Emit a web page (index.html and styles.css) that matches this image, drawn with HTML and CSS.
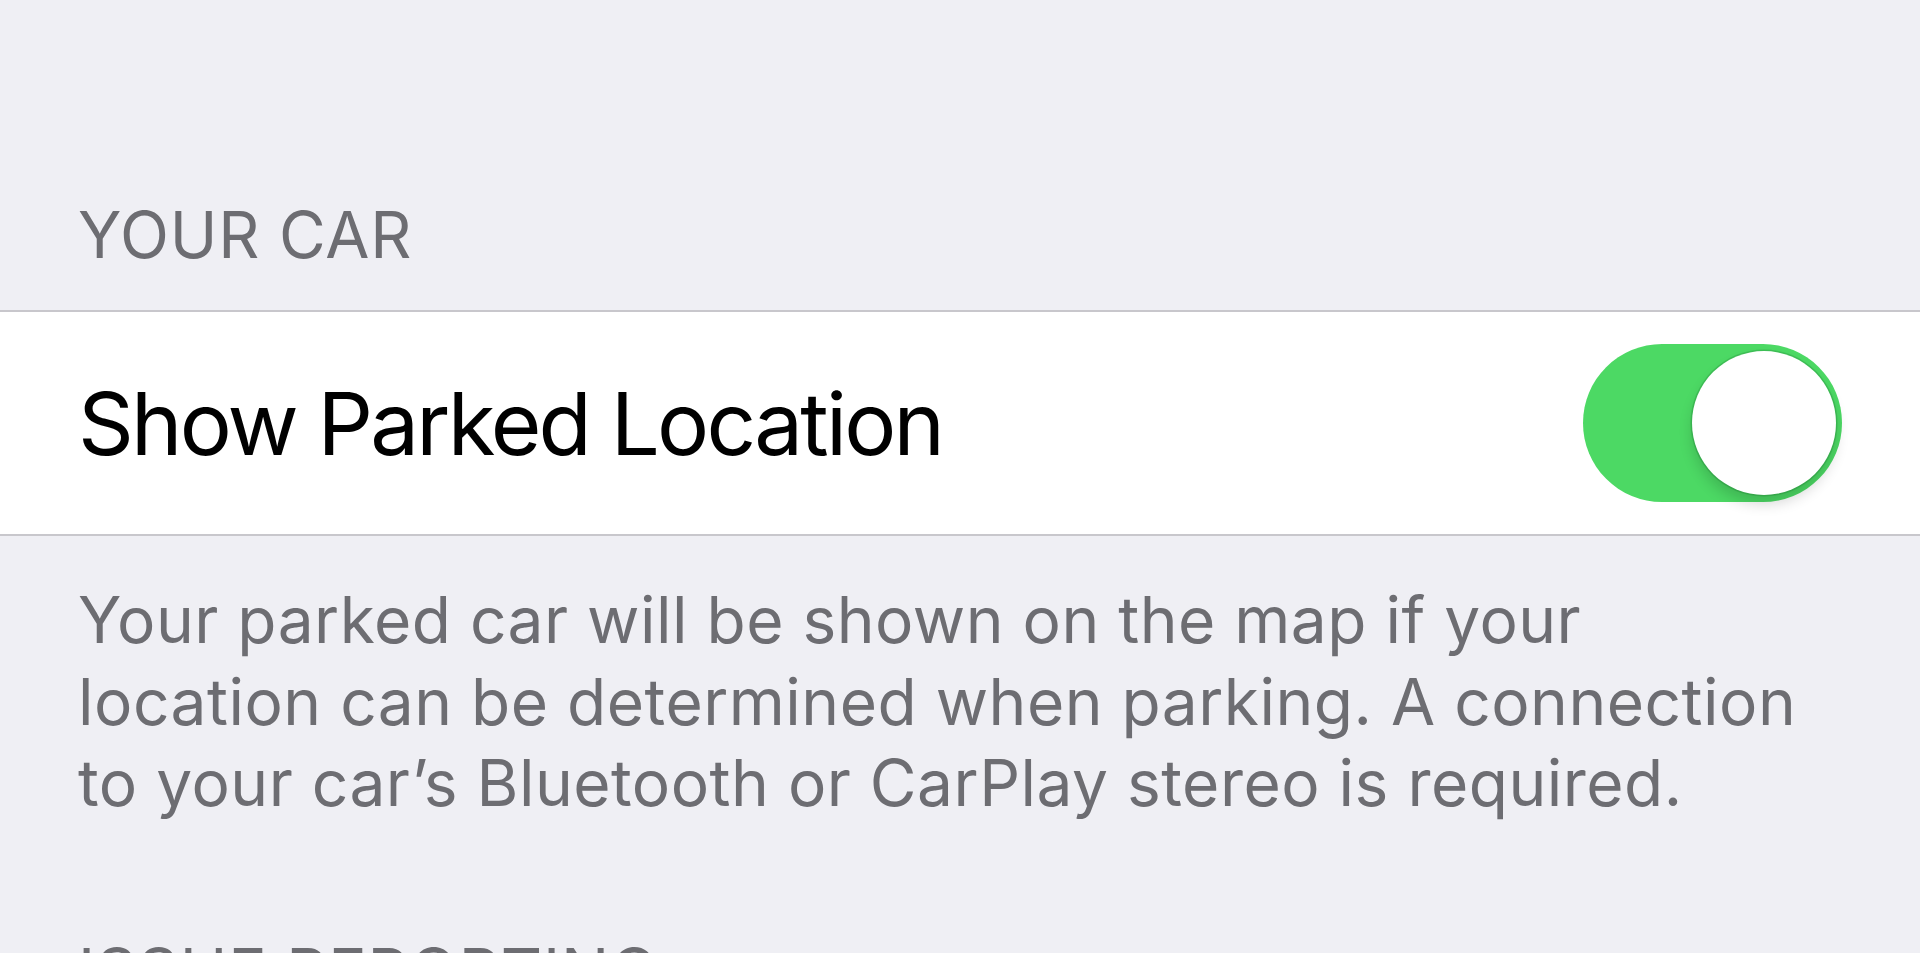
FILE: index.html
```html
<!DOCTYPE html>
<html lang="en">
<head>
    <meta charset="UTF-8">
    <meta name="viewport" content="width=device-width, initial-scale=1.0">
    <title>Maps Settings</title>
    <link rel="stylesheet" href="styles.css">
</head>
<body>
    <div class="settings">
        <div class="group">
            <div class="group-header">Your Car</div>
            <div class="cell">
                <span class="cell-label">Show Parked Location</span>
                <label class="switch on" id="parkedSwitch">
                    <span class="knob"></span>
                </label>
            </div>
            <div class="group-footer">Your parked car will be shown on the map if your location can be determined when parking. A connection to your car’s Bluetooth or CarPlay stereo is required.</div>
        </div>

        <div class="group">
            <div class="group-header">Issue Reporting</div>
        </div>
    </div>

    <script>
        const parkedSwitch = document.getElementById("parkedSwitch");
        parkedSwitch.addEventListener("click", () => parkedSwitch.classList.toggle("on"));
    </script>
</body>
</html>
```

FILE: styles.css
```css
body {
    margin: 0;
    background-color: #efeff4;
    font-family: 'Inter', 'Liberation Sans', sans-serif;
    overflow: hidden;
}
.settings {
    padding-top: 203px;
}
.group-header {
    padding: 0 80px 43px 78px;
    font-size: 64px;
    line-height: 64px;
    color: #6d6d72;
    text-transform: uppercase;
    letter-spacing: 0.8px;
}
.cell {
    display: flex;
    align-items: center;
    justify-content: space-between;
    box-sizing: border-box;
    height: 226px;
    padding: 0 78px 0 78px;
    background: #ffffff;
    border-top: 2px solid #c8c7cc;
    border-bottom: 2px solid #c8c7cc;
}
.cell-label {
    font-size: 87px;
    color: #000;
    letter-spacing: -2.8px;
}
.group-footer {
    padding: 43px 92px 116px 78px;
    font-size: 64px;
    line-height: 81.5px;
    color: #6d6d72;
    letter-spacing: 0.5px;
}
.switch {
    display: flex;
    align-items: center;
    justify-content: flex-start;
    box-sizing: border-box;
    width: 259px;
    height: 158px;
    padding: 0 6px;
    border-radius: 79px;
    background: #e5e5ea;
    cursor: pointer;
}
.switch.on {
    justify-content: flex-end;
    background: #4cd964;
}
.knob {
    width: 144px;
    height: 144px;
    border-radius: 50%;
    background: #fff;
    box-shadow: 0 0 0 1.5px rgba(0, 80, 20, 0.18), 0 9px 14px rgba(0, 0, 0, 0.16);
}
```
